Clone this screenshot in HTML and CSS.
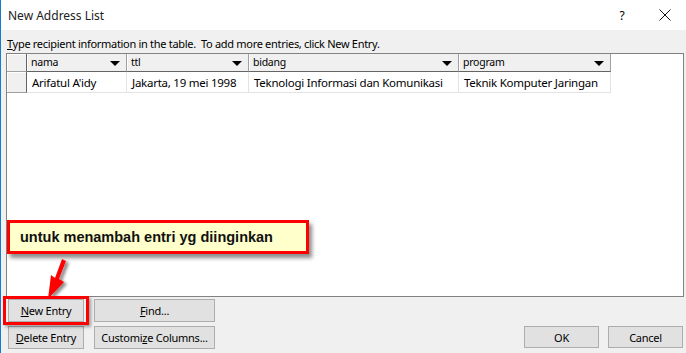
FILE: index.html
```html
<!DOCTYPE html>
<html lang="en">
<head>
    <meta charset="UTF-8">
    <title>New Address List</title>
    <link rel="stylesheet" href="styles.css">
</head>
<body>
    <div class="dialog">
        <div class="titlebar">
            <span class="title">New Address List</span>
            <span class="help">?</span>
            <span class="close">
                <svg width="12" height="12" viewBox="0 0 12 12"><path d="M0.5 0.5 L11.5 11.5 M11.5 0.5 L0.5 11.5" stroke="#111" stroke-width="1" fill="none"/></svg>
            </span>
        </div>

        <div class="content">
            <div class="hint"><u>T</u>ype recipient information in the table.&nbsp; To add more entries, click New Entry.</div>

            <div class="grid-box">
                <div class="grid">
                    <div class="cell rowhead head"></div>
                    <div class="cell head">nama<i class="drop"></i></div>
                    <div class="cell head">ttl<i class="drop"></i></div>
                    <div class="cell head">bidang<i class="drop"></i></div>
                    <div class="cell head">program<i class="drop"></i></div>

                    <div class="cell rowhead"></div>
                    <div class="cell data">Arifatul A'idy</div>
                    <div class="cell data">Jakarta, 19 mei 1998</div>
                    <div class="cell data">Teknologi Informasi dan Komunikasi</div>
                    <div class="cell data">Teknik Komputer Jaringan</div>
                </div>

                <!-- anotasi -->
                <div class="callout">untuk menambah entri yg diinginkan</div>
                <svg class="arrow" width="40" height="50" viewBox="0 0 40 50">
                    <defs>
                        <filter id="sh" x="-50%" y="-50%" width="200%" height="200%">
                            <feDropShadow dx="3" dy="2" stdDeviation="1.6" flood-color="#000" flood-opacity="0.45"/>
                        </filter>
                    </defs>
                    <polygon points="22,1 26,3 19,21 24,24 8,41 11,17 15,20" fill="#f00" filter="url(#sh)"/>
                </svg>
            </div>

            <div class="footer">
                <div class="left-buttons">
                    <span class="mark"><button class="btn"><u>N</u>ew Entry</button></span>
                    <button class="btn"><u>F</u>ind...</button>
                    <button class="btn"><u>D</u>elete Entry</button>
                    <button class="btn">Customi<u>z</u>e Columns...</button>
                </div>
                <div class="right-buttons">
                    <button class="btn small">OK</button>
                    <button class="btn small">Cancel</button>
                </div>
            </div>
        </div>
    </div>
</body>
</html>
```

FILE: styles.css
```css
* { box-sizing: border-box; }

body {
    margin: 0;
    width: 686px;
    height: 353px;
    overflow: hidden;
    font-family: "Noto Sans", sans-serif;
    font-size: 11px;
    letter-spacing: -0.25px;
    color: #000;
    background: #f0f0f0;
}

.dialog {
    height: 353px;
    display: flex;
    flex-direction: column;
    border-left: 1px solid #1979ca;
}

/* Barre de titre */
.titlebar {
    height: 30px;
    background: #fff;
    display: flex;
    align-items: center;
    padding-left: 7px;
    font-size: 12px;
    letter-spacing: 0;
}

.titlebar .title { flex: 1; color: #222; }
.titlebar .help { width: 16px; margin-right: 29px; text-align: center; }
.titlebar .close { width: 12px; height: 12px; margin-right: 15px; display: flex; }

/* Contenu */
.content {
    flex: 1;
    position: relative;
    padding: 6px 0 0 5px;
}

.hint {
    height: 17px;
    line-height: 16px;
    padding-left: 1px;
    letter-spacing: -0.3px;
}

.grid-box {
    position: relative;
    width: 678px;
    height: 244px;
    background: #fff;
    border: 1px solid #828282;
}

.grid {
    display: grid;
    grid-template-columns: 20px 100px 122px 210px 152px;
    grid-template-rows: 18px 21px;
}

.cell {
    position: relative;
    padding-left: 4px;
    white-space: nowrap;
    overflow: hidden;
}

.cell.head {
    background: #f0f0f0;
    border-right: 1px solid #a0a0a0;
    border-bottom: 1px solid #646464;
    box-shadow: inset 1px 0 0 #fff;
    font-size: 10.5px;
    line-height: 17px;
}

.cell.rowhead {
    background: #f0f0f0;
    border-right: 1px solid #646464;
    border-bottom: 1px solid #a0a0a0;
    box-shadow: inset 1px 1px 0 #fff;
}

.cell.data {
    border-right: 1px solid #e3e3e3;
    border-bottom: 1px solid #e3e3e3;
    line-height: 22px;
    padding-left: 5px;
    font-size: 11.5px;
}

.drop {
    position: absolute;
    right: 6px;
    top: 7px;
    width: 0;
    height: 0;
    border-left: 5px solid transparent;
    border-right: 5px solid transparent;
    border-top: 5px solid #000;
}

/* Annotation */
.callout {
    position: absolute;
    left: 0;
    top: 166px;
    width: 302px;
    height: 34px;
    background: #ffffcc;
    border: 3px solid #f00;
    box-shadow: 3px 4px 4px rgba(0, 0, 0, 0.45);
    font-family: "Liberation Sans", Arial, sans-serif;
    font-weight: bold;
    font-size: 14.5px;
    letter-spacing: 0;
    line-height: 28px;
    padding-left: 10px;
    color: #111;
}

.arrow {
    position: absolute;
    left: 33px;
    top: 204px;
}

/* Boutons */
.footer {
    display: flex;
    justify-content: space-between;
    align-items: flex-end;
    padding: 2px 3px 0 2px;
}

.left-buttons {
    display: grid;
    grid-template-columns: 76px 121px;
    column-gap: 10px;
    row-gap: 4px;
}

.right-buttons {
    display: flex;
    gap: 9px;
    padding-bottom: 1px;
}

.btn {
    height: 23px;
    width: 100%;
    padding: 0;
    background: #e1e1e1;
    border: 1px solid #adadad;
    font-family: "Noto Sans", sans-serif;
    font-size: 11px;
    letter-spacing: -0.25px;
    white-space: nowrap;
    color: #000;
}

.btn.small { width: 75px; height: 22px; }

.mark {
    position: relative;
    display: block;
}

.mark::after {
    content: "";
    position: absolute;
    left: -5px;
    right: -5px;
    top: -3px;
    bottom: -3px;
    border: 3px solid #f00;
    box-shadow: 2px 2px 3px rgba(0, 0, 0, 0.35);
}
```
